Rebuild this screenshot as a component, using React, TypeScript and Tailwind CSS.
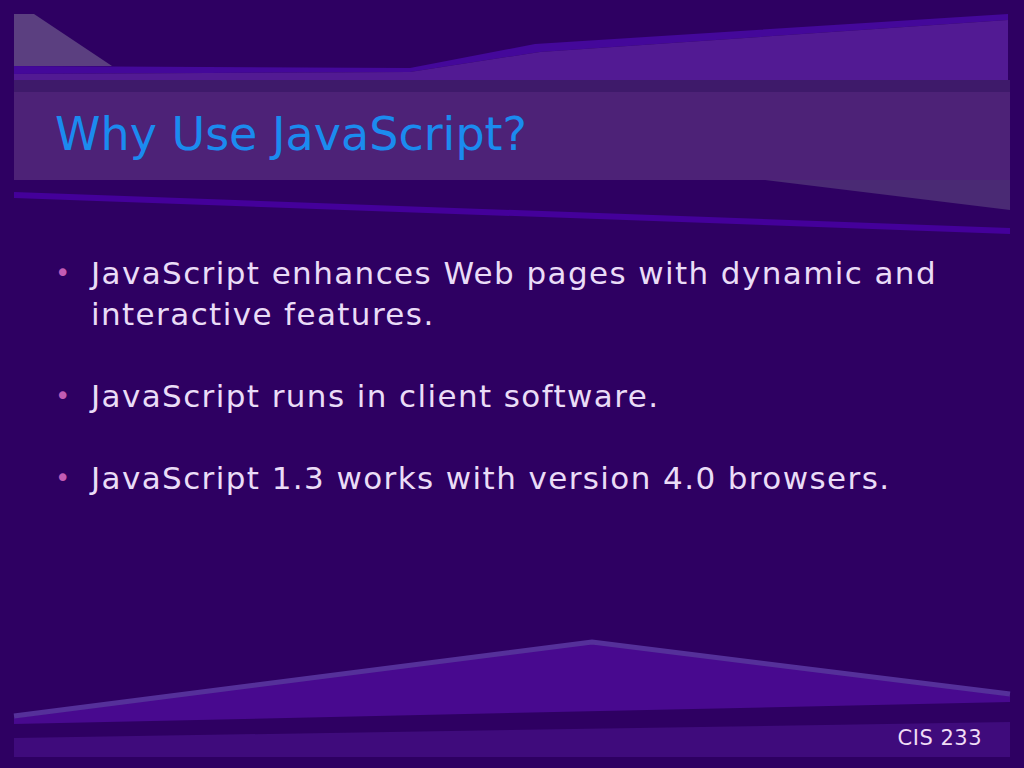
export default function App() {
  const bullets = [
    "JavaScript enhances Web pages with dynamic and interactive features.",
    "JavaScript runs in client software.",
    "JavaScript 1.3 works with version 4.0 browsers.",
  ];
  return (
    <div className="relative w-[1024px] h-[768px] overflow-hidden bg-[#2e0062]" style={{ fontFamily: '"DejaVu Sans", sans-serif' }}>
      <svg className="absolute inset-0" width="1024" height="768" viewBox="0 0 1024 768">
        <polygon points="14,14 34,14 112,66 14,66" fill="#5b3f80" />
        <polygon points="14,66 410,68 535,44 1008,14 1008,20 540,52 410,72 14,74" fill="#44089a" />
        <polygon points="14,74 410,72 540,52 1008,20 1008,80 14,80" fill="#521a93" />
        <rect x="14" y="80" width="996" height="12" fill="#3e1a6a" />
        <rect x="14" y="92" width="996" height="88" fill="#4d2277" />
        <polygon points="765,180 1010,180 1010,210" fill="#4a2a74" />
        <polygon points="14,192 1010,228 1010,234 14,198" fill="#44009a" />
        <polygon points="14,718 592,642 1010,696 1010,702 14,724" fill="#48098f" />
        <polyline points="14,716 592,642 1010,694" fill="none" stroke="#55309a" strokeWidth="5" />
        <polygon points="14,738 1010,722 1010,757 14,757" fill="#3f0b7c" />
      </svg>
      <div className="relative flex flex-col">
        <div className="pl-[55px] pt-[106px] h-[200px] text-[46px] leading-[56px] text-[#1b8bef]">Why Use JavaScript?</div>
        <div className="flex flex-col gap-[41px] pt-[53px] pl-[55px] pr-[40px]">
          {bullets.map((b) => (
            <div key={b} className="flex text-[31px] tracking-[1.4px] leading-[41px] text-[#eadcf7]">
              <span className="w-[36px] shrink-0 text-[#c35bb4] text-[26px]">•</span>
              <span>{b}</span>
            </div>
          ))}
        </div>
      </div>
      <div className="absolute right-[42px] top-[723px] text-[21px] tracking-[0.5px] text-[#f0dcf5]">CIS 233</div>
    </div>
  );
}
